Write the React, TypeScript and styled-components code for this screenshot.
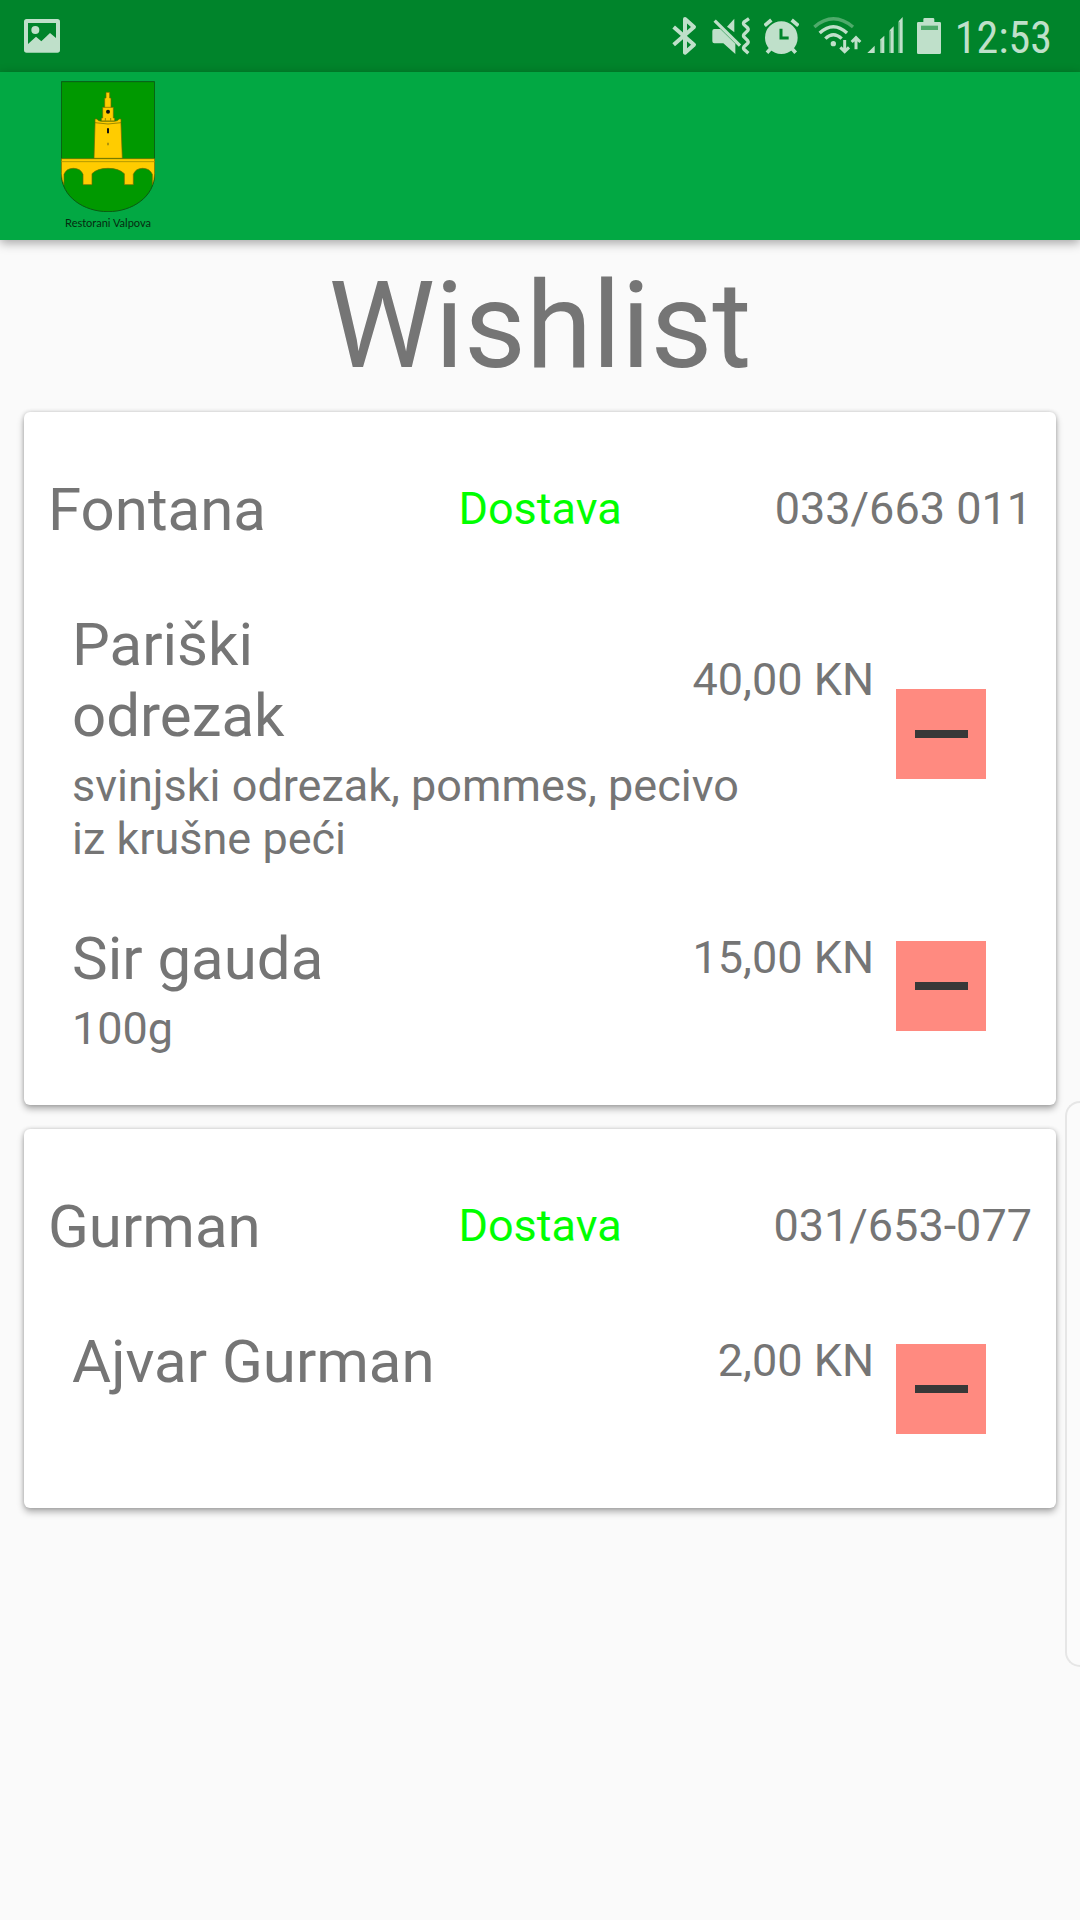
import React from "react";
import styled, { createGlobalStyle } from "styled-components";

const GlobalStyle = createGlobalStyle`
  * { box-sizing: border-box; }
  body {
    margin: 0;
    background: #fafafa;
    color: #757575;
    font-family: Roboto, "Noto Sans", sans-serif;
  }
`;

const Page = styled.div`
  min-height: 100vh;
  display: flex;
  flex-direction: column;
`;

const StatusBar = styled.div`
  height: 72px;
  padding: 0 28px 0 24px;
  display: flex;
  align-items: center;
  justify-content: space-between;
  background: #00842b;
  color: #bfe0ca;
`;

const StatusIcons = styled.div`
  display: flex;
  align-items: center;
  gap: 14px;
`;

const Network = styled.div`
  display: flex;
  gap: 5px;
`;

const Clock = styled.time`
  padding-top: 4px;
  font-family: "Roboto Condensed", Roboto, sans-serif;
  font-size: 44px;
  line-height: 48px;
`;

const Glyph = styled.svg`
  display: block;
  flex: none;
`;

const AppBar = styled.header`
  height: 168px;
  padding: 9px 61px 0;
  display: flex;
  align-items: flex-start;
  background: #02a843;
  box-shadow: 0 3px 10px rgba(0, 0, 0, 0.35);
`;

const Brand = styled.a`
  display: flex;
  flex-direction: column;
  align-items: center;
  gap: 3px;
  width: 94px;
  color: #062a10;
  text-decoration: none;
  white-space: nowrap;
  font-family: Papyrus, Lato, sans-serif;
  font-size: 11px;
  line-height: 16px;
`;

const Main = styled.main`
  display: flex;
  flex-direction: column;
  gap: 24px;
  padding: 0 24px 24px;
`;

const Title = styled.h1`
  margin: 0;
  padding-top: 24px;
  text-align: center;
  font-size: 120px;
  font-weight: 400;
  line-height: 124px;
`;

const Card = styled.section`
  padding: 62px 24px 24px;
  border-radius: 6px;
  background: #fff;
  box-shadow: 0 4px 7px rgba(0, 0, 0, 0.3), 0 0 4px rgba(0, 0, 0, 0.18);
`;

const CardHeader = styled.div`
  display: grid;
  grid-template-columns: 1fr auto 1fr;
  align-items: center;
  padding-bottom: 32px;
`;

const Name = styled.h2`
  margin: 0;
  font-size: 60px;
  font-weight: 400;
  line-height: 71px;
`;

const Detail = styled.span<{ $tone?: string; $end?: boolean }>`
  padding-bottom: 2px;
  font-size: 45px;
  line-height: 53px;
  color: ${(p) => p.$tone ?? "inherit"};
  text-align: ${(p) => (p.$end ? "right" : "left")};
`;

const Items = styled.ul`
  margin: 0;
  padding: 0;
  list-style: none;
`;

const Item = styled.li`
  display: flex;
  align-items: center;
  gap: 22px;
  padding: 32px 46px 26px 24px;
`;

const ItemText = styled.div`
  flex: 1;
  display: grid;
  grid-template-columns: 1fr 1fr;
  align-items: center;
  row-gap: 8px;
`;

const Description = styled.p`
  grid-column: 1 / -1;
  min-height: 53px;
  margin: 0;
  padding-right: 120px;
  font-size: 45px;
  line-height: 53px;
`;

const RemoveButton = styled.button`
  flex: none;
  width: 90px;
  height: 90px;
  margin: 0 0 6px;
  padding: 0;
  border: 0;
  display: grid;
  place-items: center;
  background: #ff8a80;
  cursor: pointer;
`;

const Minus = styled.span`
  width: 53px;
  height: 8px;
  background: #383838;
`;

const EdgeHandle = styled.div`
  position: fixed;
  top: 1101px;
  right: 0;
  width: 15px;
  height: 566px;
  border: 2px solid #e6e6e6;
  border-right: 0;
  border-radius: 20px 0 0 20px;
  background: #fbfbfb;
`;

const ink = "#bfe0ca";

const PictureIcon = () => (
  <Glyph width="36" height="34" viewBox="72 57 108 102">
    <path
      fill={ink}
      fillRule="evenodd"
      d="M80 57H172Q180 57 180 65V150Q180 158 172 158H80Q72 158 72 150V65Q72 57 80 57ZM84 69V132L108 110L124 124L150 99L168 114V69Z"
    />
    <circle cx="106" cy="90" r="12" fill={ink} />
  </Glyph>
);

const BluetoothIcon = () => (
  <Glyph width="26" height="40" viewBox="40 48 78 120">
    <path
      d="M45 81L106 134L79 158V57L106 81L45 134"
      fill="none"
      stroke={ink}
      strokeWidth="12"
      strokeLinejoin="round"
    />
  </Glyph>
);

const MuteIcon = () => (
  <Glyph width="38" height="40" viewBox="161 48 114 120">
    <path d="M206 80L228 56V97Z" fill={ink} />
    <path d="M168 87H186L231 131V162L195 130H168Q162 130 162 124V93Q162 87 168 87Z" fill={ink} />
    <path d="M169 62L245 137" stroke={ink} strokeWidth="10" fill="none" />
    <path
      d="M272 56L257 66Q254 70 257 74L268 84Q271 88 268 92L257 103Q254 107 257 111L268 122Q271 126 268 130L257 140Q254 144 257 148L270 160"
      stroke={ink}
      strokeWidth="10"
      fill="none"
    />
  </Glyph>
);

const AlarmIcon = () => (
  <Glyph width="35" height="40" viewBox="314 48 105 120">
    <circle cx="366" cy="113" r="49" fill={ink} />
    <path d="M316 77L336 60M397 60L417 77" stroke={ink} strokeWidth="11" />
    <path d="M335 145L323 158M397 145L409 158" stroke={ink} strokeWidth="11" />
    <path d="M365 86V114H388" stroke="#00842b" strokeWidth="9" fill="none" />
  </Glyph>
);

const WifiIcon = () => (
  <Glyph width="49" height="40" viewBox="462 48 147 120">
    <path d="M466 81Q523 32 582 81" fill="none" stroke="#4fab6b" strokeWidth="10" />
    <path d="M482 99Q523 61 564 99" fill="none" stroke={ink} strokeWidth="10" />
    <path d="M499 116Q523 92 548 116" fill="none" stroke={ink} strokeWidth="10" />
    <circle cx="523" cy="131" r="8" fill={ink} />
    <path
      d="M557 120V153M544 142L557 155L570 142M591 148V114M578 126L591 113L604 126"
      fill="none"
      stroke={ink}
      strokeWidth="9"
    />
  </Glyph>
);

const SignalIcon = () => (
  <Glyph width="36" height="40" viewBox="25 48 108 120">
    <path fill={ink} d="M26 159L48 137V159Z" />
    <path fill={ink} d="M64 159V119L77 107V159ZM93 159V91L105 79V159ZM120 159V64L132 51V159Z" />
    <path d="M66 159V121M95 159V93M122 159V66" stroke="#7dc393" strokeWidth="4" />
  </Glyph>
);

const BatteryIcon = () => (
  <Glyph width="24" height="40" viewBox="174 48 72 120">
    <path
      fill={ink}
      d="M178 66H193V58Q193 54 197 54H222Q226 54 226 58V66H242Q246 66 246 70V158Q246 162 242 162H178Q174 162 174 158V70Q174 66 178 66Z"
    />
    <path fill="#4fab6b" d="M186 77H237V90H186Z" />
  </Glyph>
);

const Crest = () => (
  <Glyph width="94" height="131" viewBox="183 242 282 393">
    <path
      d="M184 244H464V520C464 590 396 634 324 634C252 634 184 590 184 520Z"
      fill="#009900"
      stroke="#0a5a14"
      strokeWidth="3"
    />
    <g fill="#ffcc00" stroke="#6b6a00" strokeWidth="2">
      <path d="M184 475H464V520Q463 540 457 553V522Q449 504 428 504Q407 504 400 522V553H373V520Q356 504 324 504Q292 504 276 520V553H249V522Q242 504 220 504Q199 504 192 522V553Q185 540 184 520Z" />
      <path d="M318 276H329V293H333V321H340V353H344V362H304V353H308V321H314V293H318Z" />
      <path d="M285 356H291Q293 362 304 363H343Q355 362 357 356H363V371L367 474H282L285 371Z" />
    </g>
    <path d="M285 367Q324 375 363 367M314 321H333M316 353V361M332 353V361" fill="none" stroke="#6b6a00" strokeWidth="2" />
    <path d="M184 484H464" stroke="#b39a00" strokeWidth="3" />
    <circle cx="324" cy="334" r="6" fill="#111" />
    <path d="M321 384H327V399H321Z" fill="#111" />
    <path d="M322 427H326V435H322Z" fill="#8a7a10" />
  </Glyph>
);

type Dish = { name: string; price: string; description: string };
type Restaurant = { name: string; phone: string; dishes: Dish[] };

const restaurants: Restaurant[] = [
  {
    name: "Fontana",
    phone: "033/663 011",
    dishes: [
      {
        name: "Pariški odrezak",
        price: "40,00 KN",
        description: "svinjski odrezak, pommes, pecivo iz krušne peći",
      },
      { name: "Sir gauda", price: "15,00 KN", description: "100g" },
    ],
  },
  {
    name: "Gurman",
    phone: "031/653-077",
    dishes: [{ name: "Ajvar Gurman", price: "2,00 KN", description: "" }],
  },
];

export default function App() {
  return (
    <Page>
      <GlobalStyle />
      <StatusBar>
        <PictureIcon />
        <StatusIcons>
          <BluetoothIcon />
          <MuteIcon />
          <AlarmIcon />
          <Network>
            <WifiIcon />
            <SignalIcon />
          </Network>
          <BatteryIcon />
          <Clock>12:53</Clock>
        </StatusIcons>
      </StatusBar>
      <AppBar>
        <Brand href="#">
          <Crest />
          Restorani Valpova
        </Brand>
      </AppBar>
      <Main>
        <Title>Wishlist</Title>
        {restaurants.map((restaurant) => (
          <Card key={restaurant.name}>
            <CardHeader>
              <Name>{restaurant.name}</Name>
              <Detail $tone="#00ff00">Dostava</Detail>
              <Detail $end>{restaurant.phone}</Detail>
            </CardHeader>
            <Items>
              {restaurant.dishes.map((dish) => (
                <Item key={dish.name}>
                  <ItemText>
                    <Name as="h3">{dish.name}</Name>
                    <Detail $end>{dish.price}</Detail>
                    <Description>{dish.description}</Description>
                  </ItemText>
                  <RemoveButton type="button" aria-label="Ukloni">
                    <Minus />
                  </RemoveButton>
                </Item>
              ))}
            </Items>
          </Card>
        ))}
      </Main>
      <EdgeHandle />
    </Page>
  );
}
